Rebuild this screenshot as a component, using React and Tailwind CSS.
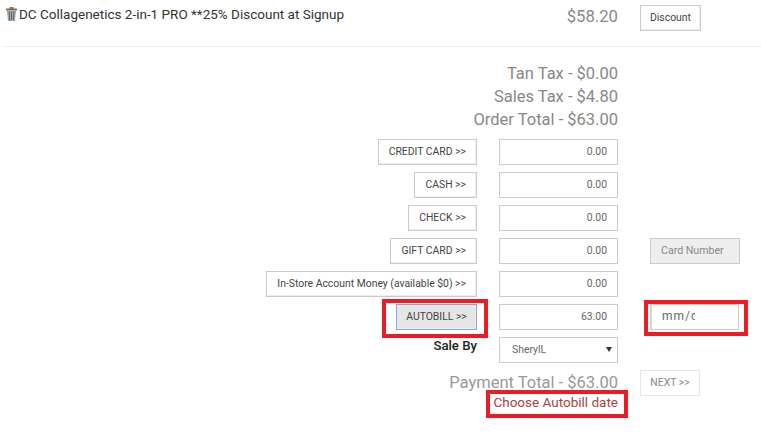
import React from 'react';

const rows = [
  { label: 'CREDIT CARD >>', value: '0.00' },
  { label: 'CASH >>', value: '0.00' },
  { label: 'CHECK >>', value: '0.00' },
  { label: 'GIFT CARD >>', value: '0.00', card: true },
  { label: 'In-Store Account Money (available $0) >>', value: '0.00' },
];

const btn = 'h-[26px] whitespace-nowrap border border-[#ccc] bg-white px-[10px] text-[10.4px] leading-[24px] text-[#444] shadow-[inset_-1px_-1px_0_#eee]';
const field = 'w-[119px] h-[26px] border border-[#ccc] bg-white px-[10px] text-[10.4px] leading-[24px] text-[#666]';

const TrashIcon = () => (
  <svg width="11" height="14" viewBox="0 0 11 14" className="shrink-0">
    <rect x="3.5" y="0" width="4" height="2" fill="#8a7a68" />
    <rect x="0" y="1.5" width="11" height="2" rx="0.5" fill="#6f6a64" />
    <path d="M1 4h9l-1 10H2z" fill="#9aa6b2" />
    <path d="M3.2 5l.4 8M5.5 5v8M7.8 5l-.4 8" stroke="#5a5a5a" strokeWidth="0.8" />
    <path d="M1 4h9v1H1z" fill="#c08a55" />
  </svg>
);

const App = () => {
  return (
    <div className="relative w-[761px] h-[434px] overflow-hidden bg-white font-['Roboto',sans-serif]">
      <div className="flex items-start h-[47px] ml-[3px] border-b border-[#eee]">
        <div className="flex items-center gap-[2px] w-[500px] pt-[4px] pl-[3px] text-[13.5px] leading-[20px] text-[#333]">
          <TrashIcon />
          <span>DC Collagenetics 2-in-1 PRO **25% Discount at Signup</span>
        </div>
        <div className="w-[115px] pt-[5px] text-right text-[16.7px] leading-[24px] text-[#888]">$58.20</div>
        <button className={`${btn} ml-[22px] mt-[5px] w-[61px] !px-0 text-center`}>Discount</button>
      </div>

      <div className="mt-[15px] w-[618px] text-right text-[16.5px] leading-[23px] text-[#888]">
        <div>Tan Tax - $0.00</div>
        <div>Sales Tax - $4.80</div>
        <div>Order Total - $63.00</div>
      </div>

      <div className="mt-[8px] flex flex-col gap-[7px]">
        {rows.map((row) => (
          <div key={row.label} className="flex items-center">
            <div className="flex w-[477px] justify-end">
              <button className={btn}>{row.label}</button>
            </div>
            <div className={`${field} ml-[22px] text-right`}>{row.value}</div>
            {row.card && (
              <div className="ml-[32px] w-[90px] h-[26px] border border-[#ccc] bg-[#eee] pl-[10px] text-[10.6px] leading-[24px] text-[#888]">
                Card Number
              </div>
            )}
          </div>
        ))}

        <div className="flex items-center">
          <div className="flex w-[477px] justify-end">
            <button className={`${btn} w-[81px] !px-0 text-center !border-[#8aa4e0] !bg-[#e6e6e6]`}>AUTOBILL &gt;&gt;</button>
          </div>
          <div className={`${field} ml-[22px] text-right`}>63.00</div>
          <div className="ml-[32px] w-[89px] h-[26px] border border-[#ccc] bg-white pl-[11px] text-[12px] tracking-[1px] leading-[23px] text-[#666] shadow-[inset_1px_0_0_#ddd]">
            <span className="inline-block w-[33px] overflow-hidden whitespace-nowrap align-top">mm/dd</span>
          </div>
        </div>
      </div>

      <div className="mt-[7px] flex">
        <div className="w-[477px] text-right text-[13.2px] leading-[18px] font-medium text-[#222]">Sale By</div>
        <div className={`${field} ml-[22px] relative pl-[12px] text-left`}>
          SherylL
          <span className="absolute right-[5px] top-[9px] w-0 h-0 border-x-[3px] border-x-transparent border-t-[5px] border-t-[#333]" />
        </div>
      </div>

      <div className="mt-[7px] flex items-center">
        <div className="w-[618px] text-right text-[16.5px] leading-[24px] text-[#999]">Payment Total - $63.00</div>
        <button className={`${btn} ml-[22px] w-[60px] !px-0 text-center !text-[#888] !border-[#e6e6e6] shadow-none`}>NEXT &gt;&gt;</button>
      </div>

      <div className="-mt-[4px] w-[618px] text-right text-[13.5px] leading-[20px] text-[#a94442]">Choose Autobill date</div>

      {/* red annotation boxes drawn on top of the screenshot */}
      <div className="absolute left-[382px] top-[299px] w-[106px] h-[39px] border-[4px] border-[#ed1c24]" />
      <div className="absolute left-[644px] top-[300px] w-[104px] h-[36px] border-[4px] border-[#ed1c24]" />
      <div className="absolute left-[486px] top-[390px] w-[142px] h-[28px] border-[4px] border-[#ed1c24]" />
    </div>
  );
};

export default App;
